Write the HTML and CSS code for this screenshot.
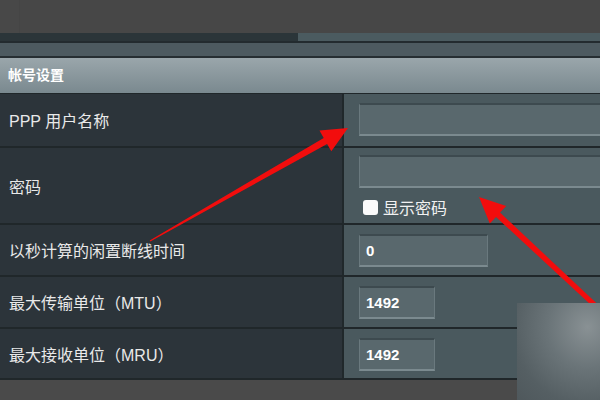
FILE: index.html
```html
<html>
    <head>
        <title>帐号设置</title>
        <link rel="stylesheet" href="styles.css">
    </head>
    <body>
        <div class="page">
            <div class="top"></div>
            <div class="strip"><div class="strip-left"></div><div class="strip-right"></div></div>
            <div class="band"></div>
            <div class="header">帐号设置</div>
            <div class="rows">
                <div class="row row-user">
                    <div class="label">PPP 用户名称</div>
                    <div class="field"><div class="input wide"></div></div>
                </div>
                <div class="row row-pass">
                    <div class="label">密码</div>
                    <div class="field">
                        <div class="input wide"></div>
                        <div class="show"><span class="check"></span>显示密码</div>
                    </div>
                </div>
                <div class="row">
                    <div class="label">以秒计算的闲置断线时间</div>
                    <div class="field"><div class="input mid">0</div></div>
                </div>
                <div class="row">
                    <div class="label">最大传输单位（MTU）</div>
                    <div class="field"><div class="input short">1492</div></div>
                </div>
                <div class="row row-last">
                    <div class="label">最大接收单位（MRU）</div>
                    <div class="field"><div class="input short">1492</div></div>
                </div>
            </div>
            <div class="bottom"></div>

            <svg class="marks" width="600" height="400" viewBox="0 0 600 400">
                <polygon fill="#f20d0d" points="149.7,240.5 323.7,137.9 319.5,130.5 348,128 331.3,151.3 327.1,143.9 150.3,241.5" />
                <polygon fill="#f20d0d" points="479,197 506.2,205.9 500,212.5 601.7,308.2 598.3,311.8 496,216.9 489.8,223.5" />
            </svg>
            <div class="smudge"></div>
        </div>
    </body>
</html>
```
FILE: styles.css
```css
body {
    margin: 0;
    background: #4a4a4a;
    font-family: "Liberation Sans", "Noto Sans CJK SC", sans-serif;
}

.page {
    position: relative;
    width: 600px;
    height: 400px;
    overflow: hidden;
}

.top {
    height: 33px;
    background: #474747;
    border-left: 1px solid #454545;
    margin-left: 19px;
    box-shadow: -19px 0 0 #484848;
}

.strip {
    display: flex;
    height: 8px;
    border-bottom: 2px solid #232b2f;
}

.strip-left {
    width: 298px;
    background: #2b3539;
}

.strip-right {
    flex: 1;
    background: #4b5b60;
}

.band {
    height: 13px;
    background: #4d5a60;
    border-bottom: 2px solid #262e32;
}

.header {
    height: 35px;
    line-height: 35px;
    padding-left: 8px;
    background: linear-gradient(#9aa6ab, #7a898f);
    color: #fff;
    font-weight: bold;
    font-size: 14px;
}

.row {
    display: flex;
    height: 50px;
    border-top: 2px solid #20272a;
}

.row-user {
    border-top-width: 1px;
    height: 52px;
}

.row-pass {
    height: 75px;
}

.row-last {
    height: 49px;
    border-bottom: 2px solid #20272a;
}

.label {
    flex: 0 0 333px;
    padding-left: 9px;
    display: flex;
    align-items: center;
    background: #2c343a;
    border-right: 2px solid #20282b;
    color: #e9e9e9;
    font-size: 16px;
}

.field {
    flex: 1;
    min-width: 0;
    background: #4a595e;
    padding: 9px 0 0 15px;
}

.row-pass .field {
    padding-top: 7px;
}

.input {
    height: 29px;
    background: #59686d;
    border-top: 2px solid #3d4a4f;
    border-bottom: 2px solid #7b8a8f;
    border-left: 1px solid #6a797e;
    border-right: 1px solid #6a797e;
    color: #fff;
    font-size: 15px;
    font-weight: bold;
    line-height: 29px;
    padding-left: 6px;
}

.wide {
    width: 300px;
}

.mid {
    width: 121px;
}

.short {
    width: 68px;
}

.show {
    display: flex;
    align-items: center;
    margin-top: 7px;
    margin-left: 4px;
    color: #f2f2f2;
    font-size: 16px;
}

.check {
    width: 15px;
    height: 15px;
    background: #fafafa;
    border-radius: 3px;
    margin-right: 5px;
}

.bottom {
    height: 20px;
    background: #4a4a4a;
}

.marks {
    position: absolute;
    left: 0;
    top: 0;
}

.smudge {
    position: absolute;
    left: 517px;
    top: 303px;
    width: 83px;
    height: 97px;
    background: radial-gradient(ellipse at 85% 25%, #899194 0%, #6a7478 40%, #555f63 75%, #4f585c 100%);
}
```
